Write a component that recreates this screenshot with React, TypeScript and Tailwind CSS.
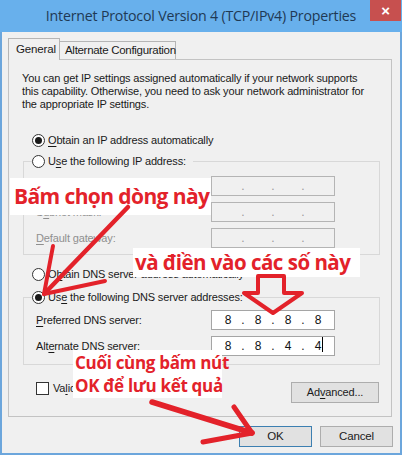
import React from "react";

const Radio = ({ checked }: { checked?: boolean }) => (
  <span className="w-[13px] h-[13px] rounded-full border border-[#333333] bg-white flex items-center justify-center shrink-0">
    {checked && <span className="w-[7px] h-[7px] rounded-full bg-[#1a1a1a]" />}
  </span>
);

const U = ({ children }: { children: React.ReactNode }) => (
  <span className="underline underline-offset-[2px]">{children}</span>
);

const IpField = ({ values, disabled, cursor }: { values?: string[]; disabled?: boolean; cursor?: boolean }) => {
  const segs = values ?? ["", "", "", ""];
  return (
    <div
      className={
        "w-[124px] h-[20px] border flex items-center pl-[4px] text-[12px] tracking-normal " +
        (disabled ? "bg-[#f0f0f0] border-[#b4b4b4] text-[#9a9a9a]" : "bg-white border-[#a5a5a5] text-[#111111]")
      }
    >
      {segs.map((s, i) => (
        <React.Fragment key={i}>
          <span className="w-[24px] text-center relative">
            {s}
            {cursor && i === 3 && <span className="absolute left-[16px] top-[0px] w-px h-[15px] bg-black" />}
          </span>
          {i < 3 && <span className="w-[6px] text-center">.</span>}
        </React.Fragment>
      ))}
    </div>
  );
};

export default function App() {
  return (
    <div className="relative w-[404px] h-[457px] bg-white overflow-hidden font-['Liberation_Sans',Arial,sans-serif] text-[11px] tracking-[-0.15px] text-[#1a1a1a] whitespace-nowrap">
      <div className="w-[402px] h-[455px] flex flex-col">
        {/* Title bar */}
        <div className="relative h-[32px] bg-[#68b0ec] flex items-center justify-center shrink-0">
          <span className="text-[14.2px] text-[#1f3954] font-['Open_Sans',sans-serif] tracking-[-0.2px]">
            Internet Protocol Version 4 (TCP/IPv4) Properties
          </span>
          <div className="absolute right-[1px] top-0 w-[31px] h-[21px] bg-[#c7504f] flex items-center justify-center text-white text-[15px] font-bold leading-none">
            ×
          </div>
        </div>
        {/* Body */}
        <div className="flex-1 flex flex-col bg-[#f0f0f0] border-x-2 border-b-2 border-[#6ca6dc] pl-[6px] pr-[8px] pt-[6px] pb-[6px]">
          {/* Tabs */}
          <div className="flex items-end h-[21px]">
            <div className="relative z-10 -mb-px h-[22px] w-[52px] border border-b-0 border-[#b5b5b5] bg-[#f0f0f0] flex items-center pl-[7px] pt-[1px] text-[11.5px]">
              General
            </div>
            <div className="h-[18px] w-[116px] border border-l-0 border-b-0 border-[#b5b5b5] bg-[#f0f0f0] flex items-center pl-[5px] text-[11.5px] tracking-[-0.3px]">
              Alternate Configuration
            </div>
          </div>
          {/* Panel */}
          <div className="border border-[#c3c3c3] pl-[13px] pr-[11px] pt-[12px] pb-[13px] flex flex-col">
            <p className="leading-[13px]">
              You can get IP settings assigned automatically if your network supports
              <br />
              this capability. Otherwise, you need to ask your network administrator for
              <br />
              the appropriate IP settings.
            </p>
            <div className="mt-[23px] ml-[10px] flex items-center gap-[3px] h-[13px]">
              <Radio checked />
              <span>
                <U>O</U>btain an IP address automatically
              </span>
            </div>
            {/* Group 1 */}
            <div className="mt-[14px] ml-[1px] border border-[#d8d8d8] pl-[12px] pb-[6px] flex flex-col">
              <div className="-mt-[7px] -ml-[4px] w-fit pr-[7px] bg-[#f0f0f0] flex items-center gap-[3px] h-[13px]">
                <Radio />
                <span>
                  U<U>s</U>e the following IP address:
                </span>
              </div>
              <div className="mt-[8px] flex flex-col gap-[6px] text-[#8f8f8f]">
                <div className="flex items-center h-[20px]">
                  <span className="w-[175px]">
                    <U>I</U>P address:
                  </span>
                  <IpField disabled />
                </div>
                <div className="flex items-center h-[20px]">
                  <span className="w-[175px]">
                    S<U>u</U>bnet mask:
                  </span>
                  <IpField disabled />
                </div>
                <div className="flex items-center h-[20px]">
                  <span className="w-[175px]">
                    <U>D</U>efault gateway:
                  </span>
                  <IpField disabled />
                </div>
              </div>
            </div>
            <div className="mt-[13px] ml-[10px] flex items-center gap-[3px] h-[13px]">
              <Radio />
              <span>
                O<U>b</U>tain DNS server address automatically
              </span>
            </div>
            {/* Group 2 */}
            <div className="mt-[16px] ml-[1px] border border-[#d8d8d8] pl-[12px] pb-[8px] flex flex-col">
              <div className="-mt-[7px] -ml-[4px] w-fit pr-[7px] bg-[#f0f0f0] flex items-center gap-[3px] h-[13px]">
                <Radio checked />
                <span>
                  Us<U>e</U> the following DNS server addresses:
                </span>
              </div>
              <div className="mt-[6px] flex flex-col gap-[6px]">
                <div className="flex items-center h-[20px]">
                  <span className="w-[175px]">
                    <U>P</U>referred DNS server:
                  </span>
                  <IpField values={["8", "8", "8", "8"]} />
                </div>
                <div className="flex items-center h-[20px]">
                  <span className="w-[175px]">
                    Alt<U>e</U>rnate DNS server:
                  </span>
                  <IpField values={["8", "8", "4", "4"]} cursor />
                </div>
              </div>
            </div>
            <div className="mt-[17px] flex items-start justify-between h-[21px]">
              <div className="ml-[14px] flex items-center gap-[4px] h-[13px]">
                <span className="w-[13px] h-[13px] border border-[#333333] bg-white" />
                <span>
                  Va<U>l</U>idate settings upon exit
                </span>
              </div>
              <div className="mr-[1px] w-[88px] h-[21px] border border-[#adadad] bg-[#e1e1e1] flex items-center justify-center">
                Ad<U>v</U>anced...
              </div>
            </div>
          </div>
          {/* Buttons */}
          <div className="mt-[9px] -mr-px flex justify-end gap-[8px]">
            <div className="w-[73px] h-[21px] border border-[#3c7fb1] bg-[#e1e1e1] flex items-center justify-center text-[11.5px]">
              OK
            </div>
            <div className="w-[73px] h-[21px] border border-[#adadad] bg-[#e1e1e1] flex items-center justify-center text-[11.5px]">
              Cancel
            </div>
          </div>
        </div>
      </div>

      {/* Annotations */}
      <div className="absolute left-[10px] top-[178px] w-[201px] h-[37px] bg-white flex items-center pl-[4px] text-[#e3222a] font-['Open_Sans',sans-serif] font-bold text-[21px] tracking-[-0.6px] leading-none">
        Bấm chọn dòng này
      </div>
      <div className="absolute left-[133px] top-[248px] w-[227px] h-[29px] bg-white flex items-center pl-[2px] text-[#e3222a] font-['Open_Sans',sans-serif] font-bold text-[20.5px] tracking-[-0.5px] leading-none">
        và điền vào các số này
      </div>
      <div className="absolute left-[73px] top-[350px] w-[149px] h-[48px] bg-white flex flex-col justify-center pl-[2px] text-[#e3222a] font-['Open_Sans',sans-serif] font-bold text-[17px] tracking-[-0.3px] leading-[23px]">
        <span>Cuối cùng bấm nút</span>
        <span>OK để lưu kết quả</span>
      </div>

      <svg className="absolute inset-0 pointer-events-none" width="404" height="457" viewBox="0 0 404 457">
        <g stroke="#e3222a" strokeLinecap="round" strokeLinejoin="round" fill="none">
          <line x1="128" y1="207" x2="45" y2="293" strokeWidth="4.5" />
          <line x1="53" y1="246" x2="44" y2="294" strokeWidth="4" />
          <line x1="105" y1="281" x2="44" y2="294" strokeWidth="4" />
          <polygon points="258,276 284,276 284,293 302,293 273,313 244,293 258,293" strokeWidth="4" />
          <line x1="152" y1="402" x2="252" y2="433" strokeWidth="5.5" />
          <line x1="234" y1="407" x2="252" y2="433" strokeWidth="5" />
          <line x1="203" y1="442" x2="252" y2="433" strokeWidth="5" />
        </g>
      </svg>
    </div>
  );
}
